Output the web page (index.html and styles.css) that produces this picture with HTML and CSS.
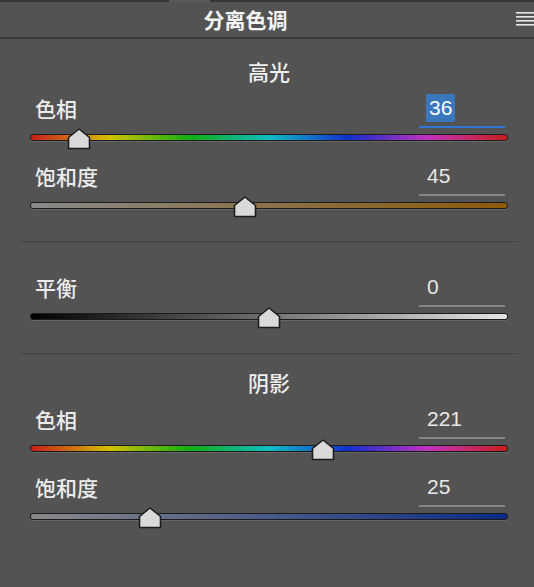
FILE: index.html
```html
<!DOCTYPE html>
<html lang="zh-CN">
<head>
<meta charset="utf-8">
<title>分离色调</title>
<link rel="stylesheet" href="styles.css">
</head>
<body>
<div class="panel">
  <div class="tabstrip"><span class="tab-dark tab-left"></span><span class="tab-gap"></span><span class="tab-dark tab-right"></span></div>
  <header class="header">
    <h1 class="title">分离色调</h1>
    <svg class="menu" viewBox="0 0 18 14" width="18" height="14" aria-hidden="true">
      <rect x="0" y="0" width="18" height="1.6" fill="#e6e6e6"/>
      <rect x="0" y="4" width="18" height="1.6" fill="#e6e6e6"/>
      <rect x="0" y="8" width="18" height="1.6" fill="#e6e6e6"/>
      <rect x="0" y="12" width="18" height="1.6" fill="#e6e6e6"/>
    </svg>
  </header>

  <section class="section section-hl">
    <h2 class="section-title">高光</h2>
    <div class="control">
      <div class="row"><span class="label">色相</span><span class="value value-active"><span class="sel">36</span></span></div>
      <div class="slider">
        <div class="track track-hue"></div>
        <svg class="thumb" style="--p:0.1" viewBox="0 0 24 22" width="24" height="22"><path d="M1.5 20.5 V9.5 L12 1 L22.5 9.5 V20.5 Z" fill="#d9d9d9" stroke="#1c1c1c" stroke-width="1.6" stroke-linejoin="round"/></svg>
      </div>
    </div>
    <div class="control">
      <div class="row"><span class="label">饱和度</span><span class="value">45</span></div>
      <div class="slider">
        <div class="track track-sat-hl"></div>
        <svg class="thumb" style="--p:0.45" viewBox="0 0 24 22" width="24" height="22"><path d="M1.5 20.5 V9.5 L12 1 L22.5 9.5 V20.5 Z" fill="#d9d9d9" stroke="#1c1c1c" stroke-width="1.6" stroke-linejoin="round"/></svg>
      </div>
    </div>
  </section>

  <div class="divider"></div>

  <section class="section section-bal">
    <div class="control">
      <div class="row"><span class="label">平衡</span><span class="value">0</span></div>
      <div class="slider">
        <div class="track track-bal"></div>
        <svg class="thumb" style="--p:0.5" viewBox="0 0 24 22" width="24" height="22"><path d="M1.5 20.5 V9.5 L12 1 L22.5 9.5 V20.5 Z" fill="#d9d9d9" stroke="#1c1c1c" stroke-width="1.6" stroke-linejoin="round"/></svg>
      </div>
    </div>
  </section>

  <div class="divider"></div>

  <section class="section section-sh">
    <h2 class="section-title">阴影</h2>
    <div class="control">
      <div class="row"><span class="label">色相</span><span class="value">221</span></div>
      <div class="slider">
        <div class="track track-hue"></div>
        <svg class="thumb" style="--p:0.6139" viewBox="0 0 24 22" width="24" height="22"><path d="M1.5 20.5 V9.5 L12 1 L22.5 9.5 V20.5 Z" fill="#d9d9d9" stroke="#1c1c1c" stroke-width="1.6" stroke-linejoin="round"/></svg>
      </div>
    </div>
    <div class="control">
      <div class="row"><span class="label">饱和度</span><span class="value">25</span></div>
      <div class="slider">
        <div class="track track-sat-sh"></div>
        <svg class="thumb" style="--p:0.25" viewBox="0 0 24 22" width="24" height="22"><path d="M1.5 20.5 V9.5 L12 1 L22.5 9.5 V20.5 Z" fill="#d9d9d9" stroke="#1c1c1c" stroke-width="1.6" stroke-linejoin="round"/></svg>
      </div>
    </div>
  </section>
</div>
</body>
</html>
```

FILE: styles.css
```css
html, body {
  margin: 0;
  padding: 0;
}

body {
  background: #535353;
  width: 534px;
  height: 587px;
  overflow: hidden;
  font-family: "Noto Sans CJK SC", "Liberation Sans", sans-serif;
  color: #ececec;
}

.tabstrip {
  display: flex;
  height: 2px;
}

.tab-dark {
  background: #363636;
}

.tab-left {
  width: 169px;
}

.tab-gap {
  width: 41px;
  background: #5a5a5a;
}

.tab-right {
  flex: 1;
}

.header {
  display: flex;
  align-items: flex-start;
  height: 35px;
  border-bottom: 2px solid #3a3a3a;
}

.title {
  flex: 1;
  margin: 0;
  padding-right: 25px;
  text-align: center;
  font-size: 21px;
  font-weight: 700;
  line-height: 35px;
  color: #f4f4f4;
}

.menu {
  flex: none;
  margin-top: 10px;
}

.section {
  padding: 0 26px 0 30px;
}

.section-hl {
  padding-top: 18px;
  padding-bottom: 23px;
}

.section-bal {
  padding-top: 31px;
  padding-bottom: 24px;
}

.section-sh {
  padding-top: 14px;
}

.section-title {
  margin: 0 0 9px;
  text-align: center;
  font-size: 21px;
  font-weight: 500;
  line-height: 28px;
  color: #f0f0f0;
}

.divider {
  height: 1px;
  background: #444444;
  margin: 0 15px 0 20px;
}

.control + .control {
  margin-top: 12px;
}

.row {
  display: flex;
  justify-content: space-between;
  height: 34px;
}

.label {
  padding-left: 5px;
  font-size: 21px;
  font-weight: 500;
  line-height: 28px;
}

.value {
  box-sizing: border-box;
  width: 86px;
  height: 34px;
  margin-right: 3px;
  padding-left: 8px;
  border-bottom: 2px solid #858585;
  font-family: "Liberation Sans", sans-serif;
  font-size: 21px;
  line-height: 28px;
  color: #e8e8e8;
}

.value-active {
  border-bottom-color: #2f78d6;
}

.sel {
  display: inline-block;
  margin-left: -1px;
  padding: 0 3px;
  background: #3b77bd;
  color: #ffffff;
}

.slider {
  position: relative;
  box-sizing: border-box;
  height: 22px;
  padding-top: 6px;
}

.track {
  box-sizing: border-box;
  height: 7px;
  border: 1px solid #1b1b1b;
  border-radius: 3px;
  box-shadow: 0 1px 0 rgba(255, 255, 255, 0.12);
}

.track-hue {
  background: linear-gradient(to right,
    #c81f1c 0%,
    #d06a14 8%,
    #d2c200 16.7%,
    #12ae12 33.3%,
    #12bcc4 50%,
    #1230cc 66.7%,
    #c232c0 83.3%,
    #c81f1c 100%);
}

.track-sat-hl {
  background: linear-gradient(to right, #8a8a8a, #8c5a0a);
}

.track-bal {
  background: linear-gradient(to right, #000000, #e4e4e4);
}

.track-sat-sh {
  background: linear-gradient(to right, #8a8a8a, #0a2a86);
}

.thumb {
  position: absolute;
  top: 0;
  left: calc(1px + var(--p) * (100% - 2px));
  width: 24px;
  height: 22px;
  margin-left: -12px;
}
```
